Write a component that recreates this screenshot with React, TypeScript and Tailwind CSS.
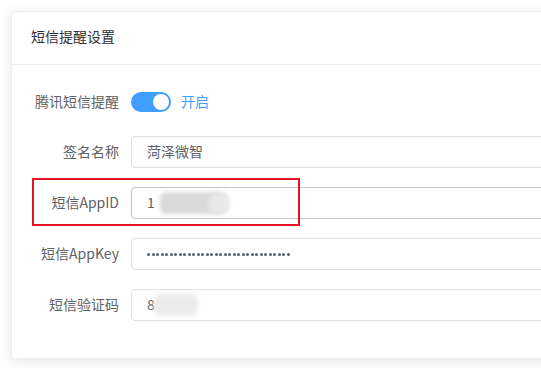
import React from "react";

const font = { fontFamily: '"Microsoft YaHei", "Noto Sans CJK SC", "Noto Sans", sans-serif' };

function Row({ label, children, className = "" }: { label: string; children: React.ReactNode; className?: string }) {
  return (
    <div className={`flex items-center h-[32px] ${className}`}>
      <div className="w-[99px] pr-[12px] pb-[2px] text-right text-[14px] text-[#606266] whitespace-nowrap">{label}</div>
      {children}
    </div>
  );
}

function Input({ children, dark = false }: { children?: React.ReactNode; dark?: boolean }) {
  return (
    <div
      className={`flex-1 h-[32px] rounded-[4px] border ${dark ? "border-[#c0c4cc]" : "border-[#dcdfe6]"} bg-white flex items-center pl-[15px] pb-[2px] text-[14px] text-[#606266] relative overflow-hidden`}
    >
      {children}
    </div>
  );
}

export default function App() {
  const dots = Array.from({ length: 32 });
  return (
    <div className="relative w-[541px] h-[368px] overflow-hidden bg-white" style={font}>
      <div className="pt-[11px] pl-[11px]">
        <div className="w-[700px] h-[348px] bg-white border border-[#ebeef5] rounded-[4px] shadow-[0_2px_12px_0_rgba(0,0,0,0.1)]">
          <div className="h-[53px] border-b border-[#ebeef5] flex items-center pl-[19px] pb-[3px] text-[14px] text-[#303133]">
            短信提醒设置
          </div>
          <div className="pl-[20px] pt-[21px]">
            <Row label="腾讯短信提醒">
              <div className="w-[40px] h-[20px] rounded-full bg-[#409eff] flex items-center justify-end pr-[2px]">
                <div className="w-[16px] h-[16px] rounded-full bg-white" />
              </div>
              <span className="ml-[10px] pb-[2px] text-[14px] text-[#409eff]">开启</span>
            </Row>
            <Row label="签名名称" className="mt-[18px]">
              <Input>菏泽微智</Input>
            </Row>
            <Row label="短信AppID" className="mt-[19px]">
              <Input dark>
                <span>1</span>
                <div className="absolute left-[28px] top-[4px] w-[66px] h-[22px] rounded-[6px] bg-[#d9d9d9] blur-[2px]" />
                <div className="absolute left-[76px] top-[5px] w-[22px] h-[20px] rounded-[8px] bg-[#e8e8e8] blur-[2px]" />
              </Input>
            </Row>
            <Row label="短信AppKey" className="mt-[19px]">
              <Input>
                <div className="flex items-center pt-[2px]">
                  {dots.map((_, i) => (
                    <span key={i} className="w-[3px] h-[3px] rounded-full bg-[#5a6270] mr-[1.5px]" />
                  ))}
                </div>
              </Input>
            </Row>
            <Row label="短信验证码" className="mt-[19px]">
              <Input>
                <span>8</span>
                <div className="absolute left-[22px] top-[4px] w-[44px] h-[22px] rounded-[8px] bg-[#ebebeb] blur-[2px]" />
              </Input>
            </Row>
          </div>
        </div>
      </div>
      <div className="absolute left-[32px] top-[178px] w-[268px] h-[48px] border-2 border-[#e81123]" />
    </div>
  );
}
